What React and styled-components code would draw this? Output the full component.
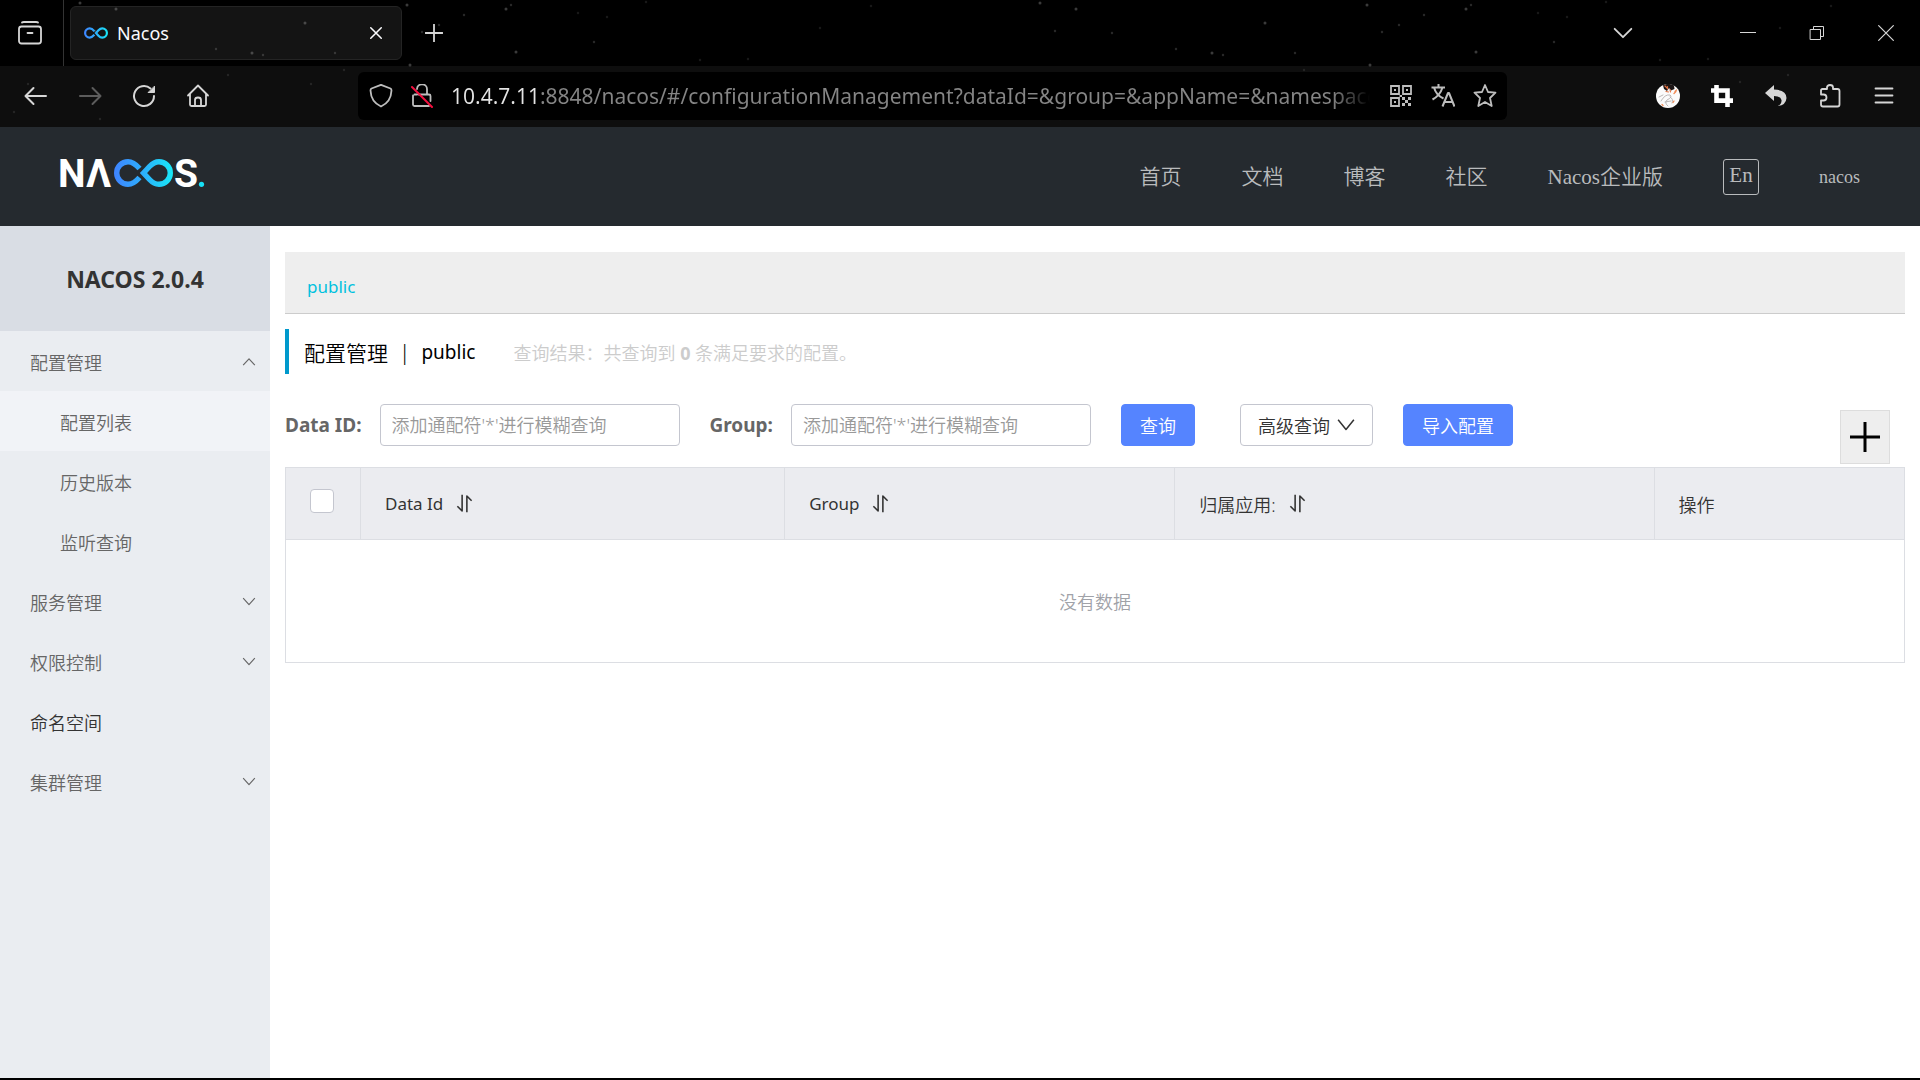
import styled, { createGlobalStyle, css } from "styled-components";

const MENU = [
  {
    name: "配置管理",
    open: true,
    children: [
      { name: "配置列表", active: true },
      { name: "历史版本" },
      { name: "监听查询" },
    ],
  },
  { name: "服务管理", children: [] },
  { name: "权限控制", children: [] },
  { name: "命名空间" },
  { name: "集群管理", children: [] },
];

const NAV = ["首页", "文档", "博客", "社区", "Nacos企业版"];

// x, y, brightness
const STARS = [
  [506, 9, 3],
  [511, 5, 2],
  [464, 15, 2],
  [516, 52, 3],
  [594, 42, 2],
  [578, 13, 1],
  [607, 17, 1],
  [646, 2, 1],
  [700, 60, 1],
  [748, 59, 1],
  [871, 6, 1],
  [820, 28, 1],
  [80, 3, 3],
  [116, 9, 3],
  [95, 31, 2],
  [152, 33, 2],
  [216, 49, 2],
  [252, 53, 3],
  [263, 55, 2],
  [305, 23, 3],
  [335, 53, 2],
  [407, 5, 3],
  [410, 65, 3],
  [439, 25, 2],
  [422, 32, 2],
  [344, 70, 1],
  [311, 84, 1],
  [228, 75, 1],
  [100, 119, 1],
  [28, 84, 1],
  [14, 112, 1],
  [828, 75, 1],
  [780, 82, 1],
];

const STAR_COLORS = { 1: "#181818", 2: "#282828", 3: "#3a3a3a" };

function Stars() {
  return (
    <Sky aria-hidden="true">
      <defs>
        <pattern id="stars" width="960" height="127" patternUnits="userSpaceOnUse">
          {STARS.map(([x, y, level]) => (
            <circle key={`${x}-${y}`} cx={x} cy={y} r={level === 3 ? 1.5 : 1.2} fill={STAR_COLORS[level]} />
          ))}
        </pattern>
      </defs>
      <rect width="100%" height="100%" fill="url(#stars)" />
    </Sky>
  );
}

function Infinity({ id }) {
  return (
    <g fill="none" stroke={`url(#${id})`} strokeWidth="5.4">
      <defs>
        <linearGradient id={id} gradientUnits="userSpaceOnUse" x1="54" y1="0" x2="113" y2="0">
          <stop offset="0" stopColor="#3f83ff" />
          <stop offset="0.5" stopColor="#2cb0fc" />
          <stop offset="1" stopColor="#18e8f6" />
        </linearGradient>
      </defs>
      <path d="M79.5 9.5C76 5.5 72.5 2.7 68 2.7A11.3 11.3 0 0 0 68 25.3C72.5 25.3 76 22.5 79.5 18.5" />
      <path d="M83.5 14L89.5 7.5C92.5 4.3 95 2.7 99 2.7A11.3 11.3 0 0 1 99 25.3C95 25.3 92.5 23.7 89.5 20.5Z" />
    </g>
  );
}

function Logo() {
  return (
    <svg width="160" height="60" viewBox="-6 -16 160 60" role="img" aria-label="NACOS.">
      <LogoLetter x="-2" y="28">
        N
      </LogoLetter>
      <LogoLetter x="26" y="28">
        Λ
      </LogoLetter>
      <Infinity id="logo-fill" />
      <LogoLetter x="114" y="28">
        S
      </LogoLetter>
      <circle cx="141.5" cy="25.3" r="2.6" fill="#18e0f6" />
    </svg>
  );
}

function Icon({ size = 24, stroke = 1.8, children, ...rest }) {
  return (
    <svg
      width={size}
      height={size}
      viewBox="0 0 24 24"
      fill="none"
      stroke="currentColor"
      strokeWidth={stroke}
      strokeLinecap="round"
      strokeLinejoin="round"
      aria-hidden="true"
      {...rest}
    >
      {children}
    </svg>
  );
}

function SortIcon() {
  return (
    <Icon size={19} stroke={2} strokeLinecap="butt">
      <path d="M9 1V21.5L3 15.5M15 23V2.5L21 8.5" />
    </Icon>
  );
}

function BrowserTabs() {
  return (
    <TabStrip>
      <RecentButton aria-label="最近浏览">
        <Icon>
          <path d="M4 1.5Q4.5 1 6 1H18Q19.5 1 20 1.5" />
          <rect x="1" y="5.5" width="22" height="17" rx="2.5" />
          <path d="M9.5 12H14.5" />
        </Icon>
      </RecentButton>
      <Tab>
        <svg width="24" height="12" viewBox="54 0 59 28" aria-hidden="true">
          <Infinity id="tab-fill" />
        </svg>
        <TabTitle>Nacos</TabTitle>
        <TabClose aria-label="关闭标签页">
          <Icon size={14}>
            <path d="M3 3L21 21M21 3L3 21" strokeWidth="2.6" />
          </Icon>
        </TabClose>
      </Tab>
      <StripButton aria-label="新标签页">
        <Icon size={18}>
          <path d="M12 0.5V23.5M0.5 12H23.5" strokeWidth="2.4" />
        </Icon>
      </StripButton>
      <WindowControls>
        <StripButton aria-label="列出所有标签页">
          <Icon size={20}>
            <path d="M2 7L12 17L22 7" strokeWidth="2.2" />
          </Icon>
        </StripButton>
        <WindowButtons>
          <WindowButton aria-label="最小化">
            <Icon size={16} shapeRendering="crispEdges">
              <path d="M0 11.5H24" strokeWidth="1.5" />
            </Icon>
          </WindowButton>
          <WindowButton aria-label="还原">
            <Icon size={16} strokeLinejoin="miter">
              <path d="M2.25 6.75H17.25V21.75H2.25ZM6.75 6.75V2.25H21.75V17.25H17.25" strokeWidth="1.5" />
            </Icon>
          </WindowButton>
          <WindowButton aria-label="关闭">
            <Icon size={16}>
              <path d="M1 1L23 23M23 1L1 23" strokeWidth="1.8" />
            </Icon>
          </WindowButton>
        </WindowButtons>
      </WindowControls>
    </TabStrip>
  );
}

function BrowserToolbar() {
  return (
    <Toolbar>
      <ToolButtons>
        <ToolButton aria-label="后退">
          <Icon>
            <path d="M22 12H2M9.5 4L1.5 12L9.5 20" strokeWidth="2" />
          </Icon>
        </ToolButton>
        <ToolButton aria-label="前进" disabled>
          <Icon>
            <path d="M2 12H22M14.5 4L22.5 12L14.5 20" strokeWidth="2" />
          </Icon>
        </ToolButton>
        <ToolButton aria-label="刷新">
          <Icon>
            <path d="M22 12A10 10 0 1 1 18.5 4.4" strokeWidth="2" />
            <path d="M22.5 2.5V8.5H16.5Z" fill="currentColor" strokeWidth="1" />
          </Icon>
        </ToolButton>
        <ToolButton aria-label="主页">
          <Icon>
            <path d="M2 11.5L12 1.5L22 11.5M4 10V20.5Q4 22 5.5 22H18.5Q20 22 20 20.5V10" />
            <path d="M9 22V16Q9 13.5 12 13.5T15 16V22" />
          </Icon>
        </ToolButton>
      </ToolButtons>
      <AddressBar>
        <Icon>
          <path d="M12 0.8L21.5 4.5Q22.5 5 22.5 6.5Q22 18 12 22.5Q2 18 1.5 6.5Q1.5 5 2.5 4.5Z" />
        </Icon>
        <Icon>
          <path d="M7 5A5 5 0 0 1 17 5.5V10.5M3 11.5V20.5Q3 22 4.5 22H19M8.5 10.5H19Q20.5 10.5 20.5 12V17M7 10.5H4.5" />
          <path d="M2 3L22 23" stroke="#f5103f" strokeWidth="2" />
        </Icon>
        <AddressInput
          aria-label="网址"
          readOnly
          value="10.4.7.11:8848/nacos/#/configurationManagement?dataId=&group=&appName=&namespace="
        />
        <AddressActions>
          <AddressButton aria-label="二维码">
            <Icon strokeLinejoin="miter">
              <path d="M2 2H10V10H2ZM14 2H22V10H14ZM2 14H10V22H2Z" />
              <path
                d="M5 5H7V7H5ZM17 5H19V7H17ZM5 17H7V19H5ZM13 13H16V16H13ZM16 16H19V19H16ZM19 13H22V16H19ZM13 19H16V22H13ZM19 19H22V22H19ZM10.5 11H13V13H10.5Z"
                fill="currentColor"
                stroke="none"
              />
            </Icon>
          </AddressButton>
          <AddressButton aria-label="翻译">
            <Icon strokeLinecap="butt">
              <path d="M0.5 3.5H14M7.5 0V3.5M3 3.5Q5 11 12.5 14.5M11.5 3.5Q9 11.5 1.5 15.5" strokeWidth="2" />
              <path d="M11.5 22.5L17 9H18L23.5 22.5M13.5 18H21.5" strokeWidth="2" />
            </Icon>
          </AddressButton>
          <AddressButton aria-label="添加书签">
            <Icon>
              <path d="M12 1L15 8L22.5 8.7L17 14L18.7 22L12 18L5.3 22L7 14L1.5 8.7L9 8Z" />
            </Icon>
          </AddressButton>
        </AddressActions>
      </AddressBar>
      <ToolButtons>
        <ToolButton aria-label="账户">
          <Icon>
            <circle cx="12" cy="12" r="12" fill="#fbfbfb" stroke="none" />
            <path d="M7 1.2A12 12 0 0 1 18 1.5L18.5 5L15 6.5L13 4L11 7L8 5Z" fill="#1b1414" stroke="none" />
            <path d="M9 2L11.5 4.5M11.5 2.5V5M10 7.5L12.5 8M14 5.5L14.5 8" stroke="#e0703f" strokeWidth="1.2" />
            <path d="M5 17Q9 10 14 11Q17 13 11 16Q8 19 12 22M14 13Q18 15 16 19M3 13L7 11M9 18L15 17" stroke="#aaa6a6" strokeWidth="0.8" />
            <path d="M18 9.5L20 7.5M17 18.5L18 17M6 20.5L7 21.5M19 7.5L20.5 6" stroke="#ef8a55" strokeWidth="1.3" />
          </Icon>
        </ToolButton>
        <ToolButton aria-label="截图" $bright>
          <Icon size={22} strokeLinecap="butt" strokeLinejoin="miter">
            <path d="M6 0V17H24M0 6H18V24" strokeWidth="5" />
          </Icon>
        </ToolButton>
        <ToolButton aria-label="撤销">
          <Icon>
            <path
              d="M1 9L10 1V5.5Q22.5 6 22.5 14Q22 21 14 22Q18 20 17.5 16Q16.5 12 10 12V17Z"
              fill="currentColor"
              stroke="none"
            />
          </Icon>
        </ToolButton>
        <ToolButton aria-label="扩展">
          <Icon>
            <path d="M3 10.5V6.5Q3 5 4.5 5H9V3.5Q9 1 12 1T15 3.5V5H19.5Q21.5 5 21.5 7V20.5Q21.5 22.5 19.5 22.5H5Q3 22.5 3 20.5V16.5H5.5Q8.5 16.5 8.5 13.5T5.5 10.5Z" />
          </Icon>
        </ToolButton>
        <ToolButton aria-label="菜单">
          <Icon>
            <path d="M3.5 4.5H20.5M3.5 11.5H20.5M3.5 18.5H20.5" />
          </Icon>
        </ToolButton>
      </ToolButtons>
    </Toolbar>
  );
}

function Arrow({ up }) {
  return (
    <Icon size={14} stroke={2} strokeLinecap="butt">
      <path d={up ? "M2 17.5L12 6.5L22 17.5" : "M2 5.5L12 16.5L22 5.5"} />
    </Icon>
  );
}

function Sidebar() {
  return (
    <Side>
      <SideTitle>NACOS 2.0.4</SideTitle>
      <Menu>
        {MENU.map((item) => (
          <li key={item.name}>
            <MenuLink href="#" $leaf={!item.children}>
              {item.name}
              {item.children && <Arrow up={item.open} />}
            </MenuLink>
            {item.open && (
              <Menu>
                {item.children.map((child) => (
                  <li key={child.name}>
                    <MenuLink href="#" $sub $active={child.active}>
                      {child.name}
                    </MenuLink>
                  </li>
                ))}
              </Menu>
            )}
          </li>
        ))}
      </Menu>
    </Side>
  );
}

export default function App() {
  return (
    <Page>
      <GlobalStyle />
      <Browser>
        <Stars />
        <BrowserTabs />
        <BrowserToolbar />
      </Browser>
      <Header>
        <Logo />
        <Nav>
          {NAV.map((name) => (
            <NavLink key={name} href="#">
              {name}
            </NavLink>
          ))}
          <LangButton>En</LangButton>
          <UserLink href="#">nacos</UserLink>
        </Nav>
      </Header>
      <Body>
        <Sidebar />
        <Main>
          <Namespaces>
            <NamespaceLink href="#">public</NamespaceLink>
          </Namespaces>
          <TitleRow>
            <Title>
              <span>配置管理</span>
              <span>|</span>
              <TitleNamespace>public</TitleNamespace>
            </Title>
            <Result>
              查询结果：共查询到 <b>0</b> 条满足要求的配置。
            </Result>
          </TitleRow>
          <SearchForm onSubmit={(e) => e.preventDefault()}>
            <Field>
              <Label htmlFor="dataId">Data ID:</Label>
              <TextInput id="dataId" placeholder="添加通配符'*'进行模糊查询" />
            </Field>
            <Field>
              <Label htmlFor="group">Group:</Label>
              <TextInput id="group" placeholder="添加通配符'*'进行模糊查询" />
            </Field>
            <Button type="submit" $primary>
              查询
            </Button>
            <Advanced>
              <Button type="button">
                高级查询
                <Icon size={18} stroke={2} strokeLinecap="butt">
                  <path d="M1.5 5L12 18L22.5 5" />
                </Icon>
              </Button>
            </Advanced>
            <Button type="button" $primary>
              导入配置
            </Button>
            <AddButton type="button" aria-label="新建配置">
              <Icon size={30} stroke={2.4} strokeLinecap="butt">
                <path d="M12 0V24M0 12H24" />
              </Icon>
            </AddButton>
          </SearchForm>
          <Table>
            <colgroup>
              <col width="75" />
              <col width="26.2%" />
              <col width="24.1%" />
              <col width="29.6%" />
              <col />
            </colgroup>
            <thead>
              <tr>
                <Th>
                  <Checkbox type="checkbox" aria-label="全选" />
                </Th>
                <Th>
                  <Sortable $latin>
                    Data Id <SortIcon />
                  </Sortable>
                </Th>
                <Th>
                  <Sortable $latin>
                    Group <SortIcon />
                  </Sortable>
                </Th>
                <Th>
                  <Sortable>
                    归属应用: <SortIcon />
                  </Sortable>
                </Th>
                <Th>操作</Th>
              </tr>
            </thead>
            <tbody>
              <tr>
                <Empty colSpan={5}>没有数据</Empty>
              </tr>
            </tbody>
          </Table>
        </Main>
      </Body>
    </Page>
  );
}

const GlobalStyle = createGlobalStyle`
  * {
    box-sizing: border-box;
  }
  body {
    margin: 0;
    font-family: "Noto Sans", "Noto Sans CJK SC", sans-serif;
    font-size: 18px;
    color: #333;
    background: #fff;
  }
  button, input {
    font: inherit;
    color: inherit;
  }
  button {
    padding: 0;
    border: none;
    background: none;
    cursor: pointer;
  }
  a {
    text-decoration: none;
  }
  svg {
    display: block;
    flex-shrink: 0;
  }
`;
const Page = styled.div`
  min-height: 100vh;
  display: flex;
  flex-direction: column;
  border-bottom: 2px solid #000;
`;

const center = css`
  display: flex;
  align-items: center;
  justify-content: center;
`;

const Browser = styled.div`
  position: relative;
  background: #000;
  color: #d6d6d6;
`;
const Sky = styled.svg`
  position: absolute;
  inset: 0;
  width: 100%;
  height: 100%;
`;
const TabStrip = styled.div`
  position: relative;
  height: 66px;
  display: flex;
  align-items: center;
`;
const RecentButton = styled.button`
  ${center}
  width: 64px;
  height: 66px;
  padding-right: 4px;
  border-right: 1px solid #333;
`;
const Tab = styled.div`
  width: 332px;
  height: 54px;
  margin: 0 8px 0 6px;
  padding: 0 18px 0 13px;
  display: flex;
  align-items: center;
  gap: 9px;
  border: 1px solid #242424;
  border-radius: 6px;
  background: rgba(255, 255, 255, 0.08);
  color: #fbfbfe;
`;
const TabTitle = styled.span`
  flex: 1;
`;
const TabClose = styled.button``;
const StripButton = styled.button`
  ${center}
  width: 48px;
  height: 48px;
`;
const WindowControls = styled.div`
  margin-left: auto;
  display: flex;
  align-items: center;
  gap: 66px;
`;
const WindowButtons = styled.div`
  display: flex;
`;
const WindowButton = styled.button`
  ${center}
  width: 69px;
  height: 66px;
`;
const Toolbar = styled.div`
  position: relative;
  height: 61px;
  padding: 0 9px 1px;
  display: flex;
  align-items: center;
  justify-content: space-between;
  background: rgba(255, 255, 255, 0.055);
`;
const ToolButtons = styled.div`
  display: flex;
`;
const ToolButton = styled.button`
  ${center}
  width: 54px;
  height: 48px;
  color: ${({ $bright }) => ($bright ? "#fff" : "#d6d6d6")};
  &:disabled {
    color: #5c5c5c;
  }
`;
const AddressBar = styled.div`
  flex: 1;
  height: 48px;
  margin: 0 134px 0 133px;
  padding: 0 10px 0 11px;
  display: flex;
  align-items: center;
  gap: 17px;
  border-radius: 6px;
  background: #000;
  color: #bdbdbd;
`;
/* host part is bright, the rest is dimmed and fades out at the right edge */
const AddressInput = styled.input`
  flex: 1;
  min-width: 0;
  height: 42px;
  padding: 0 0 1px;
  border: none;
  outline: none;
  font-size: 21px;
  color: transparent;
  background: linear-gradient(
    to right,
    #e4e4e4 0 88px,
    #858585 88px calc(100% - 40px),
    #000 calc(100% - 2px)
  );
  background-clip: text;
`;
const AddressActions = styled.div`
  display: flex;
  gap: 18px;
`;
const AddressButton = styled.button``;

const Header = styled.header`
  height: 99px;
  padding: 0 60px 0 54px;
  display: flex;
  align-items: center;
  justify-content: space-between;
  background: #252a2f;
  & > svg {
    margin-bottom: 7px;
  }
`;
const LogoLetter = styled.text`
  font-family: Roboto, sans-serif;
  font-size: 39px;
  font-weight: 700;
  fill: #fff;
`;
const Nav = styled.nav`
  display: flex;
  align-items: center;
  gap: 60px;
  font-family: "Liberation Serif", "Noto Sans CJK SC", serif;
  font-size: 21px;
  color: #b9bbbd;
`;
const NavLink = styled.a`
  padding-bottom: 4px;
  color: inherit;
  font-weight: 350;
`;
const LangButton = styled.button`
  width: 36px;
  height: 36px;
  padding-bottom: 3px;
  border: 1px solid #b9bbbd;
  border-radius: 3px;
`;
const UserLink = styled.a`
  padding-top: 2px;
  font-size: 18px;
  color: inherit;
`;

const Body = styled.div`
  flex: 1;
  display: flex;
`;
const Side = styled.aside`
  width: 270px;
  flex-shrink: 0;
  background: #eaedf1;
`;
const SideTitle = styled.h1`
  ${center}
  height: 105px;
  margin: 0;
  font-size: 23px;
  background: #d9dde4;
`;
const Menu = styled.ul`
  margin: 0;
  padding: 0;
  list-style: none;
`;
const MenuLink = styled.a`
  height: 60px;
  padding: 2px 14px 0 ${({ $sub }) => ($sub ? "60px" : "30px")};
  display: flex;
  align-items: center;
  justify-content: space-between;
  font-weight: 350;
  color: ${({ $leaf, $sub }) => ($leaf && !$sub ? "#333" : "#666")};
  background: ${({ $active }) => ($active ? "#f1f3f7" : "transparent")};
`;
const Main = styled.main`
  flex: 1;
  min-width: 0;
  padding: 26px 15px;
`;
const Namespaces = styled.div`
  height: 62px;
  padding: 7px 22px 0;
  display: flex;
  align-items: center;
  border-bottom: 1px solid #ccc;
  background: #eee;
`;
const NamespaceLink = styled.a`
  font-size: 17px;
  color: #00c1de;
`;
const TitleRow = styled.div`
  height: 45px;
  margin: 15px 0 30px;
  padding-left: 15px;
  display: flex;
  align-items: center;
  gap: 38px;
  border-left: 4px solid #09c;
`;
const Title = styled.h2`
  margin: 0;
  display: flex;
  align-items: center;
  gap: 11px;
  font-size: 21px;
  font-weight: 350;
  color: #000;
`;
const TitleNamespace = styled.span`
  font-size: 19px;
  font-weight: 400;
`;
const Result = styled.span`
  font-weight: 350;
  color: #ccc;
  b {
    font-weight: 700;
  }
`;
const SearchForm = styled.form`
  margin-bottom: 3px;
  display: flex;
  align-items: flex-start;
  gap: 30px;
`;
const Field = styled.div`
  display: flex;
  align-items: center;
  gap: 18px;
`;
const Label = styled.label`
  font-size: 19px;
  font-weight: 700;
  color: #666;
`;
const TextInput = styled.input`
  width: 300px;
  height: 42px;
  padding: 0 11px;
  border: 1px solid #c4c6cf;
  border-radius: 4px;
  &::placeholder {
    font-weight: 350;
    color: #999;
  }
`;
const Button = styled.button`
  ${center}
  gap: 7px;
  height: 42px;
  padding: 0 ${({ $primary }) => ($primary ? "18px" : "17px")};
  border-radius: 4px;
  font-weight: 350;
  white-space: nowrap;
  border: 1px solid ${({ $primary }) => ($primary ? "#5584ff" : "#c4c6cf")};
  background: ${({ $primary }) => ($primary ? "#5584ff" : "#fff")};
  color: ${({ $primary }) => ($primary ? "#fff" : "#333")};
`;
const Advanced = styled.div`
  padding-left: 15px;
`;
const AddButton = styled.button`
  ${center}
  width: 50px;
  height: 54px;
  margin: 6px 15px 0 auto;
  border: 1px solid #ddd;
  background: #eee;
  color: #000;
`;
const Table = styled.table`
  width: 100%;
  table-layout: fixed;
  border-collapse: collapse;
  border: 1px solid #dcdee3;
`;
const Th = styled.th`
  height: 72px;
  padding: 0 24px;
  border: 1px solid #dcdee3;
  background: #ebecf0;
  font-weight: 350;
  text-align: left;
`;
const Sortable = styled.span`
  display: flex;
  align-items: center;
  gap: 12px;
  font-size: ${({ $latin }) => ($latin ? "17px" : "18px")};
  font-weight: ${({ $latin }) => ($latin ? 400 : 350)};
`;
const Checkbox = styled.input`
  appearance: none;
  display: block;
  width: 24px;
  height: 24px;
  margin: 0 0 6px;
  border: 1px solid #c4c6cf;
  border-radius: 4px;
  background: #fff;
`;
const Empty = styled.td`
  height: 123px;
  padding: 0;
  text-align: center;
  font-weight: 350;
  color: #a0a2a8;
`;
